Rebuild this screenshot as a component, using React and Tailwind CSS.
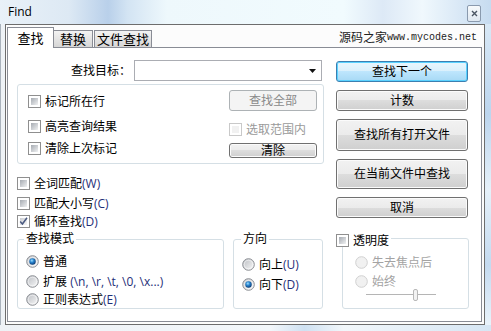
import React from 'react';

const ui = "font-['Open_Sans','Noto_Sans_CJK_SC',sans-serif]";

function CheckBox({ checked, disabled }) {
  return (
    <span
      className={`relative flex w-[13px] h-[13px] shrink-0 border p-[2px] bg-white ${
        disabled ? 'border-[#c9c9c9]' : 'border-[#8f8f8f]'
      }`}
    >
      <span
        className={`flex-1 ${
          disabled
            ? 'bg-[#f1f1f1]'
            : checked
            ? 'bg-linear-to-br from-[#c9ccd1] to-[#f7f7f7]'
            : 'bg-linear-to-br from-[#a6abb2] to-[#f1f2f3]'
        }`}
      />
      {checked && (
        <svg className="absolute left-0 top-0" width="11" height="11" viewBox="0 0 11 11">
          <path d="M2.2 5.6 L4.4 8 L9 1.8" fill="none" stroke="#4a5a80" strokeWidth="1.5" />
        </svg>
      )}
    </span>
  );
}

function Radio({ checked, disabled }) {
  return (
    <svg width="13" height="13" viewBox="0 0 13 13" className="shrink-0">
      <defs>
        <linearGradient id="radFill" x1="0" y1="0" x2="1" y2="1">
          <stop offset="0" stopColor="#b9bcc1" />
          <stop offset="1" stopColor="#fafafa" />
        </linearGradient>
        <radialGradient id="radDot" cx="40%" cy="35%" r="65%">
          <stop offset="0" stopColor="#9fe0ff" />
          <stop offset="0.45" stopColor="#2a86d0" />
          <stop offset="1" stopColor="#0c3f7a" />
        </radialGradient>
      </defs>
      <circle
        cx="6.5"
        cy="6.5"
        r="5.8"
        fill={disabled ? '#f1f1f1' : 'url(#radFill)'}
        stroke={disabled ? '#d0d0d0' : '#8c8f94'}
        strokeWidth="1"
      />
      {!disabled && <circle cx="6.5" cy="6.5" r="4.3" fill="none" stroke="#ffffff" strokeOpacity="0.55" />}
      {checked && <circle cx="6.5" cy="6.5" r="3.2" fill="url(#radDot)" />}
    </svg>
  );
}

function Btn({ children, className = '', variant = 'normal' }) {
  const styles = {
    normal:
      'border-[#707070] bg-[linear-gradient(180deg,#f2f2f2_0%,#ebebeb_50%,#dddddd_50%,#cfcfcf_100%)] shadow-[inset_0_0_0_1px_#fbfbfb] text-black',
    focus:
      'border-[#3c7fb1] bg-[linear-gradient(180deg,#eaf6fd_0%,#d9f0fc_50%,#bee6fd_50%,#a7d9f5_100%)] shadow-[inset_0_0_0_1px_#5ad2ff] text-black',
    disabled: 'border-[#adb2b5] bg-[#f4f4f4] text-[#8a8a8a]',
  };
  return (
    <div
      className={`flex items-center justify-center rounded-[3px] border text-[12px] leading-[14px] ${styles[variant]} ${className}`}
    >
      {children}
    </div>
  );
}

function Check({ label, hint, checked, disabled, className = '' }) {
  return (
    <div className={`flex items-center gap-[4px] h-[13px] ${className}`}>
      <CheckBox checked={checked} disabled={disabled} />
      <span className={`text-[12px] leading-[13px] whitespace-nowrap ${disabled ? 'text-[#9a9a9a]' : 'text-black'}`}>
        {label}
        {hint && <span className="text-[#1f2f78]">{hint}</span>}
      </span>
    </div>
  );
}

function Option({ label, hint, checked, disabled, className = '' }) {
  return (
    <div className={`flex items-center gap-[4px] h-[13px] ${className}`}>
      <Radio checked={checked} disabled={disabled} />
      <span className={`text-[12px] leading-[13px] whitespace-nowrap ${disabled ? 'text-[#a3a3a3]' : 'text-black'}`}>
        {label}
        {hint && <span className="text-[#1f2f78]">{hint}</span>}
      </span>
    </div>
  );
}

export default function App() {
  return (
    <div className={`w-[491px] h-[331px] flex flex-col overflow-hidden bg-[#dce9f5] ${ui}`}>
      {/* title bar */}
      <div className="h-[24px] shrink-0 flex items-start bg-[linear-gradient(90deg,#e9f1f8_0%,#dde9f4_14%,#b9d0ea_22%,#d3e4f3_26%,#eef8fc_34%,#f1fbfe_70%,#dde9f6_78%,#f0f8fd_86%,#c6dbf0_100%)]">
        <span className="ml-[8px] mt-[4px] text-[12px] leading-[16px] text-black">Find</span>
        <div className="ml-auto mr-[10px] mt-[5px] w-[14px] h-[17px] rounded-[2px] border border-[#8a9aae] bg-linear-to-b from-[#f7fafc] to-[#dfe8f1] flex items-center justify-center">
          <svg width="7" height="7" viewBox="0 0 7 7">
            <path d="M1 1 L6 6 M6 1 L1 6" stroke="#4a5563" strokeWidth="1.4" />
          </svg>
        </div>
      </div>

      <div className="flex flex-1">
        {/* left frame */}
        <div className="w-[5px] border-l border-[#a9b2bc] bg-[#eef2f6]" />

        {/* client */}
        <div className="w-[480px] border border-[#6d6d6d] bg-[#fcfcfc] flex flex-col pl-[1px] pr-[2px] pt-[2px] pb-[2px]">
          {/* tab strip */}
          <div className="h-[20px] shrink-0 flex items-end">
            <div className="relative z-10 -mb-px w-[47px] h-[21px] bg-white border-t border-l border-r border-[#898c95] flex items-start justify-center pt-[3px] text-[13px] leading-[14px]">
              查找
            </div>
            <div className="w-[39px] h-[17px] border-t border-r border-[#898c95] bg-linear-to-b from-[#f3f3f3] to-[#d6d6d6] flex items-center justify-center text-[13px] leading-[14px]">
              替换
            </div>
            <div className="ml-[1px] w-[58px] h-[17px] border-t border-l border-r border-[#898c95] bg-linear-to-b from-[#f3f3f3] to-[#d6d6d6] flex items-center justify-center text-[13px] leading-[14px]">
              文件查找
            </div>
            <div className="ml-auto mr-[5px] mb-[2px] flex items-end text-[#222] leading-[14px]">
              <span className="text-[12px]">源码之家</span>
              <span className="font-['Liberation_Mono',monospace] text-[10px]">www.mycodes.net</span>
            </div>
          </div>

          {/* tab page */}
          <div className="flex-1 border border-[#898c95] bg-white flex pl-[9px] pt-[12px]">
            {/* left column */}
            <div className="w-[307px] flex flex-col">
              <div className="h-[21px] flex items-center justify-end pr-[2px]">
                <span className="text-[12px] leading-[14px] mr-[3px]">查找目标：</span>
                <div className="w-[188px] h-[21px] border border-[#abadb3] bg-white flex items-center justify-end pr-[5px]">
                  <svg width="7" height="4" viewBox="0 0 7 4">
                    <path d="M0 0 H7 L3.5 4 Z" fill="#111" />
                  </svg>
                </div>
              </div>

              <div className="mt-[3px] h-[80px] rounded-[3px] border border-[#d5dfe5] flex">
                <div className="flex flex-col pl-[10px] pt-[10px]">
                  <Check label="标记所在行" />
                  <Check label="高亮查询结果" className="mt-[12px]" />
                  <Check label="清除上次标记" className="mt-[9px]" />
                </div>
                <div className="ml-auto mr-[6px] w-[88px] flex flex-col">
                  <Btn variant="disabled" className="mt-[5px] h-[21px]">查找全部</Btn>
                  <Check label="选取范围内" disabled className="mt-[12px]" />
                  <Btn className="mt-[7px] h-[15px]">清除</Btn>
                </div>
              </div>

              <Check label="全词匹配" hint="(W)" className="mt-[13px]" />
              <Check label="匹配大小写" hint="(C)" className="mt-[7px]" />
              <Check label="循环查找" hint="(D)" checked className="mt-[5px]" />

              <div className="mt-[11px] flex">
                <div className="relative w-[207px] h-[70px] rounded-[3px] border border-[#d5dfe5] flex flex-col pl-[8px] pt-[15px]">
                  <span className="absolute -top-[8px] left-[6px] px-[2px] bg-white text-[12px] leading-[14px]">查找模式</span>
                  <Option label="普通" checked />
                  <Option label="扩展 " hint="(\n, \r, \t, \0, \x...)" className="mt-[7px]" />
                  <Option label="正则表达式" hint="(E)" className="mt-[5px]" />
                </div>
                <div className="relative ml-[9px] w-[90px] h-[70px] rounded-[3px] border border-[#d5dfe5] flex flex-col pl-[8px] pt-[18px]">
                  <span className="absolute -top-[8px] left-[7px] px-[2px] bg-white text-[12px] leading-[14px]">方向</span>
                  <Option label="向上" hint="(U)" />
                  <Option label="向下" hint="(D)" checked className="mt-[7px]" />
                </div>
              </div>
            </div>

            {/* right column */}
            <div className="ml-[12px] w-[133px] flex flex-col">
              <Btn variant="focus" className="mt-[1px] h-[21px] w-[132px]">查找下一个</Btn>
              <Btn className="mt-[8px] h-[21px] w-[132px]">计数</Btn>
              <Btn className="mt-[8px] h-[32px] w-[132px]">查找所有打开文件</Btn>
              <Btn className="mt-[8px] h-[30px] w-[132px]">在当前文件中查找</Btn>
              <Btn className="mt-[8px] h-[21px] w-[132px]">取消</Btn>

              <div className="relative mt-[20px] ml-[6px] w-[127px] h-[71px] rounded-[3px] border border-[#d5dfe5] flex flex-col pl-[12px] pt-[17px]">
                <div className="absolute -top-[5px] -left-[7px] pr-[2px] bg-white">
                  <Check label="透明度" />
                </div>
                <Option label="失去焦点后" disabled />
                <Option label="始终" disabled className="mt-[6px]" />
                <div className="relative mt-[1px] ml-[11px] w-[70px] h-[12px] flex items-center">
                  <div className="w-full h-[2px] border-t border-[#b5b5b5] border-b border-b-white bg-[#e2e2e2]" />
                  <div className="absolute left-[47px] top-0 w-[5px] h-[12px] rounded-[2px] border border-[#b8b8b8] bg-[#f3f3f3]" />
                </div>
              </div>
            </div>
          </div>
        </div>

        {/* right frame */}
        <div className="flex-1 bg-[linear-gradient(180deg,#d8e8f6_0%,#bcd5ee_30%,#e6f1fa_55%,#c4daf0_80%,#e9f3fb_100%)]" />
      </div>

      {/* bottom frame */}
      <div className="h-[6px] shrink-0 bg-[linear-gradient(90deg,#eef2f6_0%,#f3f7fb_55%,#cfe1f2_62%,#f2f7fb_70%,#d6e6f4_100%)]" />
    </div>
  );
}
